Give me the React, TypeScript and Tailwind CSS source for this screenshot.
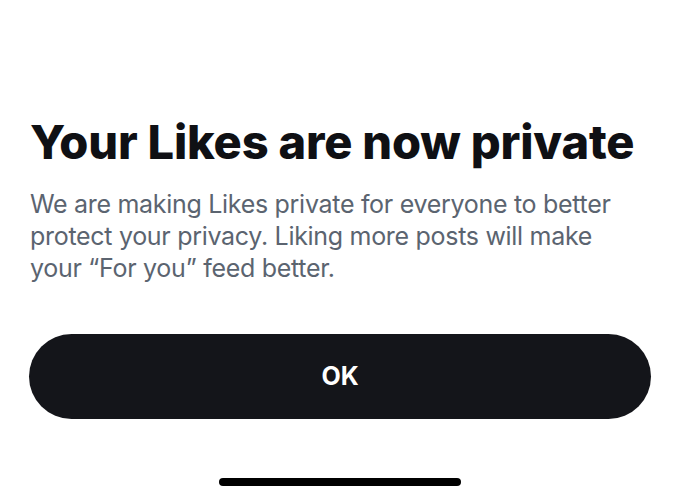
export default function App() {
  return (
    <div className="w-[680px] h-[501px] bg-white flex flex-col px-[30px] overflow-hidden" style={{ fontFamily: 'Inter, "Liberation Sans", sans-serif' }}>
      <h1 className="mt-[112px] text-[47px] leading-[60px] font-extrabold text-[#0f1014] tracking-[-0.2px]">Your Likes are now private</h1>
      <p className="mt-[16px] text-[25px] leading-[32px] text-[#5b6470] tracking-[-0.3px]">
        We are making Likes private for everyone to better protect your privacy. Liking more posts will make your “For you” feed better.
      </p>
      <button className="mt-[50px] -ml-[1px] w-[622px] h-[85px] rounded-full bg-[#14151a] text-white text-[25px] font-bold">OK</button>
      <div className="mt-[59px] self-center w-[242px] h-[8px] rounded-full bg-black" />
    </div>
  );
}
